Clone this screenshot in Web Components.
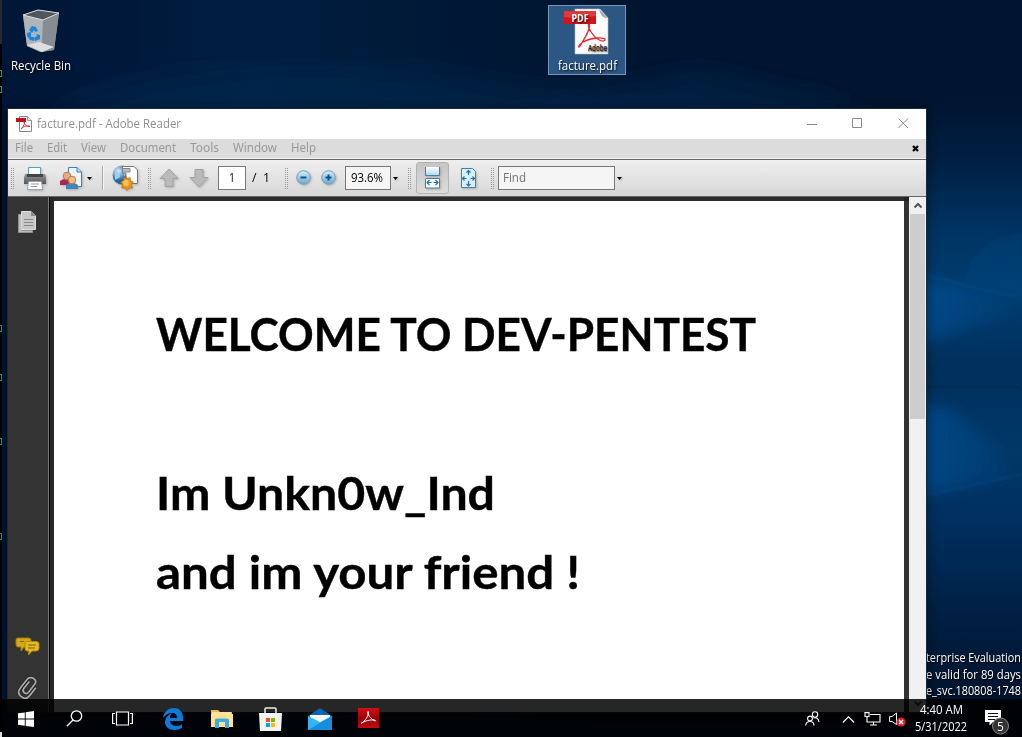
<!DOCTYPE html>
<html lang="en"><head><meta charset="utf-8"><title>Desktop</title>
<style>html,body{margin:0;width:1022px;height:737px;overflow:hidden;background:#00132b}body{font:12px/16px "Open Sans","Noto Sans",sans-serif}</style></head>
<body><desk-top></desk-top>
<script>
function define(name, html, after){
  const t=document.createElement('template'); t.innerHTML=html;
  customElements.define(name, class extends HTMLElement{
    connectedCallback(){ if(this.shadowRoot) return;
      this.attachShadow({mode:'open'}).appendChild(t.content.cloneNode(true));
      if(after) after(this);
    }});
}
/* text squeezed or stretched to a given width */
define('fit-text','<style>:host{display:block;white-space:pre;flex:none}span{display:inline-block;transform-origin:0 50%}</style><span><slot></slot></span>',h=>{
  const s=h.shadowRoot.querySelector('span'), w=+h.getAttribute('w');
  s.style.transform='scaleX('+(w/s.getBoundingClientRect().width)+')'; h.style.width=w+'px';
});
const icons={
bin:[38,44,`<path d="M1 6L16 1 37 4 32 41 18 43 5 37Z" fill="#8f9499"/><path d="M1 6L16 1 37 4 21 11Z" fill="#50565c"/><path d="M1 6L21 11 20 43 5 37Z" fill="#b0b4b8"/><path d="M21 11L37 4 32 41 20 43Z" fill="#878c92"/><path d="M5 36L17 33 32 38 20 43Z" fill="#dedede"/><path d="M1 6L16 1 37 4 21 11Z" fill="none" stroke="#d9dcde"/><g fill="#1686e0"><path d="M7 21L10 17 14 18 16 22 13 23 12 21 10 24Z"/><path d="M5 24L9 23 9 28 12 28 12 32 8 31 5 27Z"/><path d="M13 32L12 29 15 27 14 25 18 26 18 30Z"/></g>`],
pdf:[46,48,`<path d="M12 1H37L45 10V46H12Z" fill="#fbfbfb" stroke="#bbb" stroke-width=".6"/><path d="M36 1L45 10Q38 11 36 1Z" fill="#a5acb2"/><path d="M17 38C22 30 27 21 26.500 17C25.500 14 24 18 28 24C32 31 40 35 42 32C43 29 29 29 20 34C15 37 15 41 17 38Z" fill="none" stroke="#e2272d" stroke-width="1.300"/><path d="M1 3H33V16H1Z" fill="#d5131a"/><path d="M1 3H33V8Q16 11 1 9Z" fill="#e03a38"/><text x="8.500" y="13.500" font-size="10" font-weight="700" fill="#fff" textLength="17" lengthAdjust="spacingAndGlyphs">PDF</text><text x="25" y="43" font-size="9" font-weight="600" fill="#222" textLength="19" lengthAdjust="spacingAndGlyphs">Adobe</text>`],
pdfs:[17,17,`<path d="M3.5 .5H11.5L15.5 4.5V15.5H3.5Z" fill="#fff" stroke="#888"/><path d="M11.5 .5V4.5H15.5" fill="#ddd" stroke="#999"/><path d="M5 13C8 10 9 7 8.5 5.500C7 7 10 11 14 10.500 12 9 8 10 5 13Z" fill="none" stroke="#e0353b"/><path d="M0 2H10V6H0Z" fill="#c01218"/>`],
printer:[24,25,`<defs><linearGradient id="p" x2="0" y2="1"><stop stop-color="#999"/><stop offset="1" stop-color="#555"/></linearGradient></defs><path d="M5.500 1.500H17.500V9H5.500Z" fill="#f6fdff" stroke="#58a5b2"/><path d="M2 8H22Q23 9 23 13V18H1V12Z" fill="url(#p)"/><path d="M4 8H20V11H4Z" fill="#444"/><path d="M5 15H19V17H5Z" fill="#222"/><path d="M5.500 15.500H18.500L19.500 23.500H4.500Z" fill="#fff" stroke="#8eabb5"/><path d="M8 18H16M8 20.500H14" stroke="#999"/>`],
people:[23,25,`<path d="M8.500 1.500H17L21.500 6V20.500H8.500Z" fill="#eaf6ff" stroke="#3e80b7"/><path d="M17 1.500V6H21.500" fill="#b8dcf1" stroke="#3e80b7"/><path d="M0 19V15Q5 11 10 15V19Z" fill="#a72855"/><circle cx="7" cy="10" r="3.800" fill="#e9ae7c" stroke="#b77850"/><path d="M6 23V19Q12 14 18 19V23Z" fill="#3c85bd"/><circle cx="12" cy="14" r="3.800" fill="#f4bb82" stroke="#bb7847"/>`],
globe:[27,25,`<defs><radialGradient id="g" cx=".3" cy=".3"><stop stop-color="#d7efff"/><stop offset="1" stop-color="#25669f"/></radialGradient></defs><circle cx="10" cy="10" r="9.500" fill="url(#g)"/><path d="M3 5Q9 8 8 12L3 15ZM13 1L17 8 12 11Z" fill="#9cd0ed"/><path d="M10.500 1.500H22L25.500 5V18.500H14V8H10.500Z" fill="#fff" stroke="#777"/><path d="M10.500 3.500H18V7H10.500Z" fill="#bbb" stroke="#888"/><path d="M13 11l2 2.500 3.200-1 .2 3.300 3 1.200-2 2.500 1 3.500-3.400 0-2 2.500-2-2.500-3.400 0 1-3.500-2-2.500 3-1.200.2-3.300 3.200 1Z" fill="#e8961c" stroke="#b56a0a" stroke-width=".7"/><circle cx="14" cy="18" r="3" fill="#ffc24f"/>`],
up:[20,20,`<path d="M10 1L19 10.500H14V18.500H6V10.500H1Z" fill="#bababa" stroke="#a2a2a2"/>`],
down:[20,20,`<path d="M10 19L19 9.500H14V1.500H6V9.500H1Z" fill="#bababa" stroke="#a2a2a2"/>`],
minus:[16,16,`<defs><linearGradient id="m" x2="0" y2="1"><stop stop-color="#d5ecfa"/><stop offset="1" stop-color="#64a9d7"/></linearGradient></defs><circle cx="7.500" cy="7.500" r="6.800" fill="url(#m)" stroke="#7e9bad"/><path d="M4.500 7.500H10.500" stroke="#124f88" stroke-width="2"/>`],
plus:[16,16,`<defs><linearGradient id="m" x2="0" y2="1"><stop stop-color="#d5ecfa"/><stop offset="1" stop-color="#64a9d7"/></linearGradient></defs><circle cx="7.500" cy="7.500" r="6.800" fill="url(#m)" stroke="#7e9bad"/><path d="M4.500 7.500H10.500M7.500 4.500V10.500" stroke="#124f88" stroke-width="2"/>`],
fitw:[17,22,`<defs><linearGradient id="w" x2="0" y2="1"><stop stop-color="#fff"/><stop offset="1" stop-color="#b3d8ed"/></linearGradient></defs><path d="M1.500 0V8.500H15.500V0" fill="url(#w)" stroke="#427fa9"/><path d="M1.500 21V12L2 11.500H15.500V21Z" fill="#f8fcff" stroke="#427fa9"/><path d="M3 15.500H7.500M9.500 15.500H14M5.500 13L3 15.500 5.500 18M11.500 13L14 15.500 11.500 18" fill="none" stroke="#2372aa" stroke-width="1.200"/>`],
fitp:[17,21,`<path d="M1.500 .5H12.500L15.500 3.500V19.500H1.500Z" fill="#d8eefb" stroke="#427fa9"/><path d="M8.500 2V7M8.500 13V18M2.500 10.500H6.500M10.500 10.500H14.500M6.500 4.500L8.500 2.500 10.500 4.500M6.500 16L8.500 18 10.500 16M4.500 8.500L2.500 10.500 4.500 12.500M12.500 8.500L14.500 10.500 12.500 12.500" fill="none" stroke="#2372aa" stroke-width="1.200"/>`],
caret:[5,3,`<path d="M0 0H5L2.500 3Z" fill="#000"/>`],
pages:[19,22,`<path d="M.5 3.500H4V19.500H14.500V21.500H.5Z" fill="#bbb" stroke="#929292"/><path d="M3.500 .5H13L17.500 5V18.500H3.500Z" fill="#c7c7c7" stroke="#ddd"/><path d="M13 .5V5H17.500" fill="#888"/><path d="M6 8.500H15M6 11.500H15M6 14.500H15" stroke="#888"/>`],
chat:[24,19,`<path d="M2 1H13Q15 1 15 4V8Q15 10 12 10H8L5 14 5 10H2Q0 10 0 7V3Q0 1 2 1Z" fill="#d2aa13" stroke="#a77d08"/><path d="M11 4.500H20Q23 4.500 23 7V11Q23 14 20 14H16L12.500 18 13 14H11Q9 14 9 11V7Q9 4.500 11 4.500Z" fill="#e0bd24" stroke="#b68a09"/><path d="M12 8H20M12 11H19M4 4.500H8" stroke="#806009"/>`],
clip:[22,24,`<g transform="rotate(38 11 12)" fill="none"><path d="M8 6V15Q8 18 11 18T14 15V5Q14 1 10 1T5 5V17Q5 23 11 23T17 17V7" stroke="#222" stroke-width="3"/><path d="M8 6V15Q8 18 11 18T14 15V5Q14 1 10 1T5 5V17Q5 23 11 23T17 17V7" stroke="#aaa" stroke-width="1.700"/></g>`],
win:[16,16,`<path d="M0 2.300L6.800 1.400V7.500H0ZM7.700 1.200L16 0V7.500H7.700ZM0 8.500H6.800V14.700L0 13.800ZM7.700 8.500H16V16L7.700 14.900Z" fill="#fff"/>`],
search:[17,17,`<g fill="none" stroke="#fff" stroke-width="1.300"><circle cx="10.500" cy="6" r="5.200"/><path d="M7 10L.8 16.200"/></g>`],
task:[21,15,`<path d="M4.500 1H16.500V14H4.500ZM3 2.500H.6V12.500H3M18 2.500H20.400V12.500H18" fill="none" stroke="#fff" stroke-width="1.200"/>`],
edge:[21,22,`<path d="M0 10C1 3 6 0 11 0C17 0 20 5 20 10V13H7C7 17 11 18 14 18Q17 18 19 16V20Q16 22 11 22C5 22 2 18 2 14C2 10 5 7 9 5C7 7 7 9 7 10H14C14 6 12 5 9.500 5C6 5 3 6 0 10Z" fill="#087bdc"/>`],
folder:[22,19,`<path d="M0 1H7L9 3H21V18H0Z" fill="#e9b956"/><path d="M1 3H20V6H1Z" fill="#f8e4a0"/><path d="M0 5H22V18H0Z" fill="#ffe293"/><path d="M4 19V11Q4 9.500 6 9.500H16Q18 9.500 18 11V19H14V13H8V19Z" fill="#3ea9df"/>`],
store:[23,24,`<path d="M6 7V2Q6 1 7 1H16Q17 1 17 2V7" fill="none" stroke="#eee" stroke-width="1.500"/><path d="M0 6H23L22 24H1Z" fill="#f3f3f3"/><path d="M7 11H11V15H7Z" fill="#f25022"/><path d="M12 11H16V15H12Z" fill="#7fba00"/><path d="M7 16H11V20H7Z" fill="#00a4ef"/><path d="M12 16H16V20H12Z" fill="#ffb900"/>`],
mail:[24,22,`<path d="M0 8L12 0 24 8V12H0Z" fill="#0765b5"/><path d="M2 7H22V14L12 19 2 14Z" fill="#f2f6fa"/><path d="M0 8L12 14 24 8V22H0Z" fill="#35b5ef"/><path d="M0 22L24 8V22Z" fill="#188ddd"/><path d="M3 7H21L12 14Z" fill="#f7f7f7"/>`],
acro:[21,20,`<defs><linearGradient id="a" x2="0" y2="1"><stop stop-color="#d11013"/><stop offset=".55" stop-color="#970307"/><stop offset="1" stop-color="#c40b10"/></linearGradient></defs><path d="M0 0H21V20H0Z" fill="url(#a)"/><path d="M3 15.500C7 13 11 8 10.200 3.500C8.500 4 12 11.500 17.500 13C19 11.500 9 11 3 15.500Z" fill="none" stroke="#fff" stroke-width="1"/>`],
persons:[15,15,`<g fill="none" stroke="#fff" stroke-width="1.100"><circle cx="10" cy="3.500" r="2.700"/><circle cx="5" cy="7.500" r="2.400"/><path d="M.7 14.500Q1 10.500 5 10.500T9 14.500M8.500 7Q13 5.500 14 11"/></g>`],
chev:[13,7,`<path d="M.8 6.500L6.500 .8 12.200 6.500" fill="none" stroke="#fff" stroke-width="1.200"/>`],
net:[17,14,`<path d="M6 2.500H16V10H3V6.500M1 .6H5V4.500H1ZM3 4.500V7M9.500 10V13M6 13H13" fill="none" stroke="#fff" stroke-width="1.100"/>`],
vol:[18,15,`<path d="M.6 4.500H3L7.500 1V12.500L3 9.500H.6Z" fill="none" stroke="#fff"/><circle cx="12" cy="10" r="4.600" fill="#dc202c"/><path d="M10 8L14 12M14 8L10 12" stroke="#fff" stroke-width="1.300"/>`],
note:[25,25,`<path d="M0 0H16V12H8L4.500 15.500V12H0Z" fill="#fff"/><path d="M3 3.500H13M3 6.500H13M3 9.500H10" stroke="#111"/><circle cx="15.500" cy="16" r="8" fill="#333" stroke="#888"/><text x="15.500" y="20.500" font-size="12" text-anchor="middle" fill="#fff">5</text>`],
min:[11,11,`<path d="M0 5.500H10" stroke="#8a8a8a"/>`],max:[11,11,`<path d="M.5 .5H9.500V9.500H.5Z" fill="none" stroke="#8a8a8a"/>`],close:[11,11,`<path d="M.5 .5L10 10M10 .5L.5 10" stroke="#8a8a8a"/>`],
x:[7,7,`<path d="M1 1L6 6M6 1L1 6" stroke="#000" stroke-width="2.200"/>`],
sup:[8,7,`<path d="M.5 5.500L4 2 7.500 5.500" fill="none" stroke="#555" stroke-width="2"/>`],
sdown:[8,7,`<path d="M.5 1.500L4 5 7.500 1.500" fill="none" stroke="#555" stroke-width="2"/>`]
};
define('ui-icon','<style>:host{display:block;flex:none}svg{display:block;overflow:visible;font-family:"Open Sans",sans-serif}</style>',h=>{
  const [w,t,s]=icons[h.getAttribute('name')]; const b=document.createElement('div');
  b.innerHTML=`<svg width="${w}" height="${t}" viewBox="0 0 ${w} ${t}">${s}</svg>`; h.shadowRoot.append(b.firstChild);
});
define('desk-icon',`<style>:host{position:absolute;box-sizing:border-box;width:78px;height:70px;display:flex;flex-direction:column;align-items:center;color:#fff;text-shadow:1px 1px 2px #000}:host([selected]){background:#2c5785;border:1px solid #7296b7}.pic{height:52px}</style><div class="pic"><slot name="icon"></slot></div><slot></slot>`);
define('menu-bar',`<style>:host{display:flex;align-items:center;background:#dcdcdc;border-bottom:1px solid #666;box-shadow:inset 0 -1px #f4f4f4;color:#999;padding:0 7px;gap:14px;font:12px/16px "Noto Sans",sans-serif;box-sizing:border-box;height:21px}:host fit-text{margin-top:-2px}.x{margin:-1px 0 0 auto}</style>
<fit-text w="18">File</fit-text><fit-text w="20">Edit</fit-text><fit-text w="25">View</fit-text><fit-text w="56">Document</fit-text><fit-text w="29">Tools</fit-text><fit-text w="44">Window</fit-text><fit-text w="25">Help</fit-text><ui-icon class="x" name="x"></ui-icon>`);
define('tool-grip',`<style>:host{display:block;flex:none;width:3px;height:21px;background:conic-gradient(#999 25%,transparent 0) -1px 0/2px 2px}</style>`);
define('tool-field',`<style>:host{display:flex;align-items:center;box-sizing:border-box;height:24px;border:1px solid #777;background:#f5f5f5;flex:none}</style><slot></slot>`);
define('tool-bar',`<style>:host{display:flex;align-items:center;height:37px;box-sizing:border-box;background:linear-gradient(#efefef,#d7d7d7);border-bottom:1px solid #666;padding-left:3px;color:#000}
ui-icon{filter:drop-shadow(1px 1px 1px #0003)}.sep{width:1px;height:24px;background:#aaa;border-right:1px solid #f5f5f5}.sel{display:flex;align-items:center;justify-content:center;width:33px;height:32px;box-sizing:border-box;border:1px solid #b3b3b3;border-radius:3px;background:linear-gradient(#c5c5c5,#ddd)}tool-field fit-text{margin-top:-1px}tool-grip{margin-right:1px}</style>
<tool-grip></tool-grip><ui-icon name="printer" style="margin-left:8px"></ui-icon><ui-icon name="people" style="margin-left:13px"></ui-icon><ui-icon name="caret" style="margin-left:4px"></ui-icon><div class="sep" style="margin-left:10px"></div><ui-icon name="globe" style="margin-left:8px;margin-top:-2px"></ui-icon>
<tool-grip style="margin-left:9px"></tool-grip><ui-icon name="up" style="margin-left:7px"></ui-icon><ui-icon name="down" style="margin-left:10px"></ui-icon>
<tool-field style="margin-left:9px;width:28px;padding-left:10px;background:#fff"><fit-text w="6">1</fit-text></tool-field><fit-text w="18" style="margin-left:6px;margin-top:-1px">/  1</fit-text>
<tool-grip style="margin-left:15px"></tool-grip><ui-icon name="minus" style="margin-left:7px"></ui-icon><ui-icon name="plus" style="margin-left:9px"></ui-icon>
<tool-field style="margin-left:8px;width:46px;padding-left:5px"><fit-text w="32">93.6%</fit-text></tool-field><ui-icon name="caret" style="margin-left:2px"></ui-icon>
<tool-grip style="margin-left:10px"></tool-grip><div class="sel" style="margin-left:4px"><ui-icon name="fitw"></ui-icon></div><ui-icon name="fitp" style="margin-left:11px"></ui-icon>
<tool-grip style="margin-left:14px"></tool-grip><tool-field style="margin-left:3px;width:117px;padding-left:4px;color:#757575"><fit-text w="23">Find</fit-text></tool-field><ui-icon name="caret" style="margin-left:2px"></ui-icon>`);
define('doc-page',`<style>:host{display:block;background:#fff;color:#000;font:700 46px/79px Lato,sans-serif;-webkit-text-stroke:.4px #000;padding:93px 0 0 102px;box-sizing:border-box;overflow:hidden}.gap{height:80px}</style>
<fit-text w="600">WELCOME TO DEV-PENTEST</fit-text><div class="gap"></div><fit-text w="339">Im Unkn0w_Ind</fit-text><fit-text w="424">and im your friend !</fit-text>`);
define('scroll-bar',`<style>:host{display:flex;flex-direction:column;background:#f0f0f0;align-items:center}.thumb{width:15px;height:205px;background:#cdcdcd;margin-top:5px}.d{margin:auto 0 5px}</style><ui-icon name="sup" style="margin:5px 0 0"></ui-icon><div class="thumb"></div><ui-icon class="d" name="sdown"></ui-icon>`);
define('reader-window',`<style>:host{position:absolute;left:8px;top:109px;width:918px;height:603px;display:flex;flex-direction:column;background:#fff;outline:1px solid #1a2b3c;box-shadow:0 2px 10px 2px #0006}
.title{height:30px;display:flex;align-items:center;color:#8f8f8f;padding:0 17px 0 8px;box-sizing:border-box}.title fit-text{margin-left:4px}
.body{flex:1;display:grid;grid-template-columns:40px 1px 5px 850px 5px 17px;background:#2c2c2c;min-height:0}.side{background:#333;display:flex;flex-direction:column;align-items:center;padding:14px 1px 12px 0;box-sizing:border-box}.line{background:#777}.edge{background:linear-gradient(90deg,#000 1px,#282828 1px)}doc-page{margin-top:4px}.r{background:linear-gradient(#222 4px,#333 4px)}</style>
<div class="title"><ui-icon name="pdfs"></ui-icon><fit-text w="144">facture.pdf - Adobe Reader</fit-text><ui-icon name="min" style="margin:0 0 0 auto"></ui-icon><ui-icon name="max" style="margin:-1px 0 0 34px"></ui-icon><ui-icon name="close" style="margin:-1px 0 0 35px"></ui-icon></div>
<menu-bar></menu-bar><tool-bar></tool-bar><div class="body"><div class="side"><ui-icon name="pages"></ui-icon><ui-icon name="chat" style="margin-top:auto"></ui-icon><ui-icon name="clip" style="margin-top:20px"></ui-icon></div><div class="line"></div><div class="edge"></div><doc-page></doc-page><div class="r"></div><scroll-bar></scroll-bar></div>`);
define('task-bar',`<style>:host{position:absolute;left:2px;right:0;top:699px;height:38px;background:rgba(0,0,0,.85);display:flex;align-items:center;color:#fff;padding-left:16px;padding-top:2px;box-sizing:border-box}.clock{margin-left:8px;display:flex;flex-direction:column;align-items:center;width:52px;line-height:17px;margin-top:-2px}</style>
<ui-icon name="win"></ui-icon><ui-icon name="search" style="margin-left:32px;margin-top:-2px"></ui-icon><ui-icon name="task" style="margin-left:29px;margin-top:-1px"></ui-icon><ui-icon name="edge" style="margin-left:30px"></ui-icon><ui-icon name="folder" style="margin-left:27px;margin-top:-1px"></ui-icon><ui-icon name="store" style="margin-left:26px;margin-top:-1px"></ui-icon><ui-icon name="mail" style="margin-left:26px;margin-top:-1px"></ui-icon><ui-icon name="acro" style="margin-left:26px;margin-top:-3px"></ui-icon>
<ui-icon name="persons" style="margin-left:426px;margin-top:-2px"></ui-icon><ui-icon name="chev" style="margin-left:22px"></ui-icon><ui-icon name="net" style="margin-left:9px"></ui-icon><ui-icon name="vol" style="margin-left:8px"></ui-icon>
<div class="clock"><fit-text w="43">4:40 AM</fit-text><fit-text w="52">5/31/2022</fit-text></div><ui-icon name="note" style="margin-left:18px;margin-top:7px"></ui-icon>`);
define('wall-paper',`<style>:host{display:block;width:1022px;height:737px}svg{display:block}</style><svg width="1022" height="737"><defs>
<linearGradient id="t"><stop stop-color="#001636"/><stop offset=".25" stop-color="#001d40"/><stop offset=".6" stop-color="#001530"/><stop offset="1" stop-color="#001530"/></linearGradient>
<linearGradient id="r" x1="0" y1="100" x2="0" y2="737" gradientUnits="userSpaceOnUse"><stop stop-color="#001530"/><stop offset=".1" stop-color="#002043"/><stop offset=".2" stop-color="#003361"/><stop offset=".3" stop-color="#003d70"/><stop offset=".42" stop-color="#00305c"/><stop offset=".55" stop-color="#003868"/><stop offset=".66" stop-color="#00305f"/><stop offset=".8" stop-color="#002044"/><stop offset="1" stop-color="#001025"/></linearGradient>
<linearGradient id="b1" x1="920" x2="1022" gradientUnits="userSpaceOnUse"><stop stop-color="#0059a8" stop-opacity=".5"/><stop offset="1" stop-color="#0059a8" stop-opacity=".03"/></linearGradient><filter id="f"><feGaussianBlur stdDeviation="14"/></filter><filter id="s"><feGaussianBlur stdDeviation="1.500"/></filter><filter id="q" x="-.5" width="2"><feGaussianBlur stdDeviation="7"/></filter></defs>
<path fill="url(#t)" d="M0 0H1022V737H0Z"/><g filter="url(#f)"><path d="M60 108Q260 35 500 85L700 108V140H50Z" fill="#003059" opacity=".35"/><path d="M520 108L700 70 850 105V140H520Z" fill="#003566" opacity=".3"/></g>
<path d="M920 100H1022V737H920Z" fill="url(#r)"/>
<path d="M900 274L1022 302V312L900 350ZM900 398L955 410 1000 450 1010 478 900 500Z" fill="url(#b1)" filter="url(#q)"/>
<g filter="url(#s)"><path d="M965 280Q970 250 1000 238L1022 232V298Z" fill="#00508f" opacity=".2"/><path d="M920 387H1022" stroke="#002447" stroke-width="3" opacity=".4"/><path d="M900 501L1022 474M900 269L1022 299" stroke="#0868ad" opacity=".5"/></g></svg>`);
define('edge-strip',`<style>:host{position:absolute;left:0;top:0;width:2px;height:737px;overflow:hidden;background:linear-gradient(#292b2e 44px,#000 44px 732px,#ddd 732px)}i{position:absolute;left:0;width:2px;height:7px;border:solid #0fb61c;border-width:1px 1px 1px 0;box-sizing:border-box}</style>${[70,86,325,374,438,533].map(y=>`<i style="top:${y}px"></i>`).join('')}`);
define('desk-top',`<style>:host{display:block;position:relative;width:1022px;height:737px;overflow:hidden}.mark{position:absolute;right:1px;top:650px;width:95px;display:flex;flex-direction:column;align-items:flex-end;color:#fff;line-height:16.5px;text-shadow:1px 1px 1px #000}</style>
<wall-paper></wall-paper><edge-strip></edge-strip>
<desk-icon style="left:2px;top:8px"><ui-icon slot="icon" name="bin" style="margin:1px 0 0"></ui-icon><fit-text w="60" style="margin-top:-2px">Recycle Bin</fit-text></desk-icon>
<desk-icon selected style="left:548px;top:5px"><ui-icon slot="icon" name="pdf" style="margin:2px 2px 0 0"></ui-icon><fit-text w="59">facture.pdf</fit-text></desk-icon>
<div class="mark"><fit-text w="95">terprise Evaluation</fit-text><fit-text w="95">e valid for 89 days</fit-text><fit-text w="95">e_svc.180808-1748</fit-text></div>
<reader-window></reader-window><task-bar></task-bar>`);
</script></body></html>
